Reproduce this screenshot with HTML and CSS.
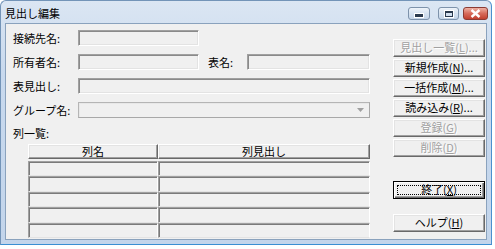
FILE: index.html
```html
<!DOCTYPE html>
<html lang="ja">
<head>
<meta charset="utf-8">
<title>見出し編集</title>
<link rel="stylesheet" href="styles.css">
</head>
<body>
<div class="window">
  <div class="titlebar">
    <span class="title">見出し編集</span>
    <div class="caption-btns">
      <span class="cbtn min"><span class="min-glyph"></span></span>
      <span class="cbtn max"><span class="max-glyph"></span></span>
      <span class="cbtn close">
        <svg width="11" height="9" viewBox="0 0 11 9"><path d="M1.5 1 L9.5 8 M9.5 1 L1.5 8" stroke="#ffffff" stroke-width="2.4" fill="none"/></svg>
      </span>
    </div>
  </div>
  <div class="client">
    <div class="form">
      <div class="row"><span class="label">接続先名:</span><span class="field w-short"></span></div>
      <div class="row"><span class="label">所有者名:</span><span class="field w-short"></span><span class="label2">表名:</span><span class="field w-right"></span></div>
      <div class="row"><span class="label">表見出し:</span><span class="field w-wide"></span></div>
      <div class="row"><span class="label">グループ名:</span><span class="field combo w-wide"><svg class="arrow" width="7" height="4" viewBox="0 0 7 4"><path d="M0 0 H7 L3.5 4 Z" fill="#a0a0a0"/></svg></span></div>
      <div class="row list-label"><span class="label">列一覧:</span></div>
      <div class="table">
        <div class="thead">
          <span class="th c1">列名</span><span class="th c2">列見出し</span>
        </div>
        <div class="tbody">
          <span class="td"></span><span class="td"></span>
          <span class="td"></span><span class="td"></span>
          <span class="td"></span><span class="td"></span>
          <span class="td"></span><span class="td"></span>
          <span class="td"></span><span class="td"></span>
        </div>
      </div>
    </div>
    <div class="buttons">
      <span class="btn disabled">見出し一覧(<u>L</u>)...</span>
      <span class="btn">新規作成(<u>N</u>)...</span>
      <span class="btn">一括作成(<u>M</u>)...</span>
      <span class="btn">読み込み(<u>R</u>)...</span>
      <span class="btn disabled">登録(<u>G</u>)</span>
      <span class="btn disabled">削除(<u>D</u>)</span>
      <span class="btn default exit">終了(<u>X</u>)</span>
      <span class="btn help">ヘルプ(<u>H</u>)</span>
    </div>
  </div>
</div>
</body>
</html>
```

FILE: styles.css
```css
html, body {
  margin: 0;
  padding: 0;
  background: #ffffff;
}

body {
  font-family: "Noto Sans CJK JP", "Noto Sans", sans-serif;
  font-size: 11px;
  color: #000000;
}

.window {
  box-sizing: border-box;
  width: 492px;
  height: 245px;
  border: 1px solid #7394b8;
  border-right-color: #4a90cf;
  border-bottom-color: #3a8fd3;
  border-radius: 6px 6px 0 0;
  background: linear-gradient(#dbe6f3, #c8d9ee 30%, #c3d5eb);
  padding: 0 4px 4px 4px;
  display: flex;
  flex-direction: column;
}

.titlebar {
  height: 22px;
  margin: 0 -4px;
  padding: 0 3px 0 4px;
  display: flex;
  align-items: flex-start;
  justify-content: space-between;
  flex: none;
}

.title {
  margin-top: 4px;
  line-height: 16px;
  font-size: 11px;
  color: #000;
}

.caption-btns {
  display: flex;
  margin-top: 6px;
}

.cbtn {
  box-sizing: border-box;
  height: 13px;
  border: 1px solid #7d92ab;
  border-radius: 3px;
  display: flex;
  align-items: center;
  justify-content: center;
  background: linear-gradient(#eef3f9, #d6e2f0 50%, #c4d4e8);
}

.cbtn.min {
  width: 22px;
  margin-right: 8px;
  align-items: flex-end;
  padding-bottom: 2px;
}

.cbtn.max {
  width: 21px;
  margin-right: 4px;
}

.cbtn.close {
  width: 25px;
  border-color: #8b3b33;
  background: linear-gradient(#eeb0a2, #d66a5a 50%, #c2402f);
}

.min-glyph {
  width: 8px;
  height: 3px;
  background: #2b3a4e;
  box-shadow: 0 0 0 1px #ffffff;
}

.max-glyph {
  box-sizing: border-box;
  width: 8px;
  height: 6px;
  border: 1px solid #2b3a4e;
  border-top-width: 2px;
  box-shadow: 0 0 0 1px #ffffff;
}

.client {
  flex: 1;
  background: #f0f0f0;
  border: 1px solid #8aa2bd;
  display: flex;
  justify-content: space-between;
  align-items: flex-start;
}

.form {
  padding: 6px 0 0 7px;
  display: flex;
  flex-direction: column;
}

.row {
  display: flex;
  align-items: center;
  height: 16px;
  margin-bottom: 8px;
}

.row.list-label {
  height: 14px;
  margin-bottom: 4px;
}

.label {
  width: 65px;
  line-height: 16px;
}

.label2 {
  width: 39px;
  margin-left: 9px;
  line-height: 16px;
}

.field {
  box-sizing: border-box;
  height: 16px;
  border: 1px solid;
  border-color: #a0a0a0 #ffffff #ffffff #a0a0a0;
  box-shadow: inset 1px 1px #8a8a8a, inset -1px -1px #e3e3e3;
  background: #f0f0f0;
}

.w-short { width: 121px; }
.w-right { width: 123px; }
.w-wide { width: 292px; }

.combo {
  border-color: #b5b5b5 #a8a8a8 #a8a8a8 #b5b5b5;
  box-shadow: inset 1px 1px #e8e8e8;
  display: flex;
  justify-content: flex-end;
  align-items: center;
  padding-right: 5px;
}

.table {
  margin-left: 15px;
  width: 342px;
}

.thead {
  display: grid;
  grid-template-columns: 130px 212px;
  height: 15px;
}

.th {
  box-sizing: border-box;
  border: 1px solid;
  border-color: #ffffff #696969 #696969 #ffffff;
  box-shadow: inset -1px -1px #a0a0a0, inset 1px 1px #e3e3e3;
  text-align: center;
  line-height: 13px;
  background: #f0f0f0;
}

.tbody {
  margin-top: 2px;
  height: 77px;
  display: grid;
  grid-template-columns: 130px 212px;
  grid-template-rows: repeat(5, 1fr);
}

.td {
  box-sizing: border-box;
  border: 1px solid;
  border-color: #a0a0a0 #ffffff #e3e3e3 #a0a0a0;
  box-shadow: inset 1px 1px #7a7a7a;
  background: #f0f0f0;
}

.buttons {
  width: 92px;
  padding-top: 15px;
  margin-right: 1px;
  display: flex;
  flex-direction: column;
}

.btn {
  box-sizing: border-box;
  height: 18px;
  margin-bottom: 2px;
  border: 1px solid;
  border-color: #ffffff #696969 #696969 #ffffff;
  box-shadow: inset -1px -1px #a0a0a0, inset 1px 1px #e3e3e3;
  background: #f0f0f0;
  text-align: center;
  line-height: 15px;
  white-space: nowrap;
  position: relative;
}

.btn.disabled {
  color: #a0a0a0;
  text-shadow: 1px 1px #ffffff;
}

.btn.exit {
  margin-top: 22px;
}

.btn.help {
  margin-top: 13px;
}

.btn.default {
  border-color: #000000;
  box-shadow: inset 1px 1px #ffffff, inset -1px -1px #696969, inset -2px -2px #a0a0a0;
}

.btn.default::after {
  content: "";
  position: absolute;
  left: 3px;
  top: 3px;
  right: 3px;
  bottom: 3px;
  border: 1px dotted #000000;
}
```
